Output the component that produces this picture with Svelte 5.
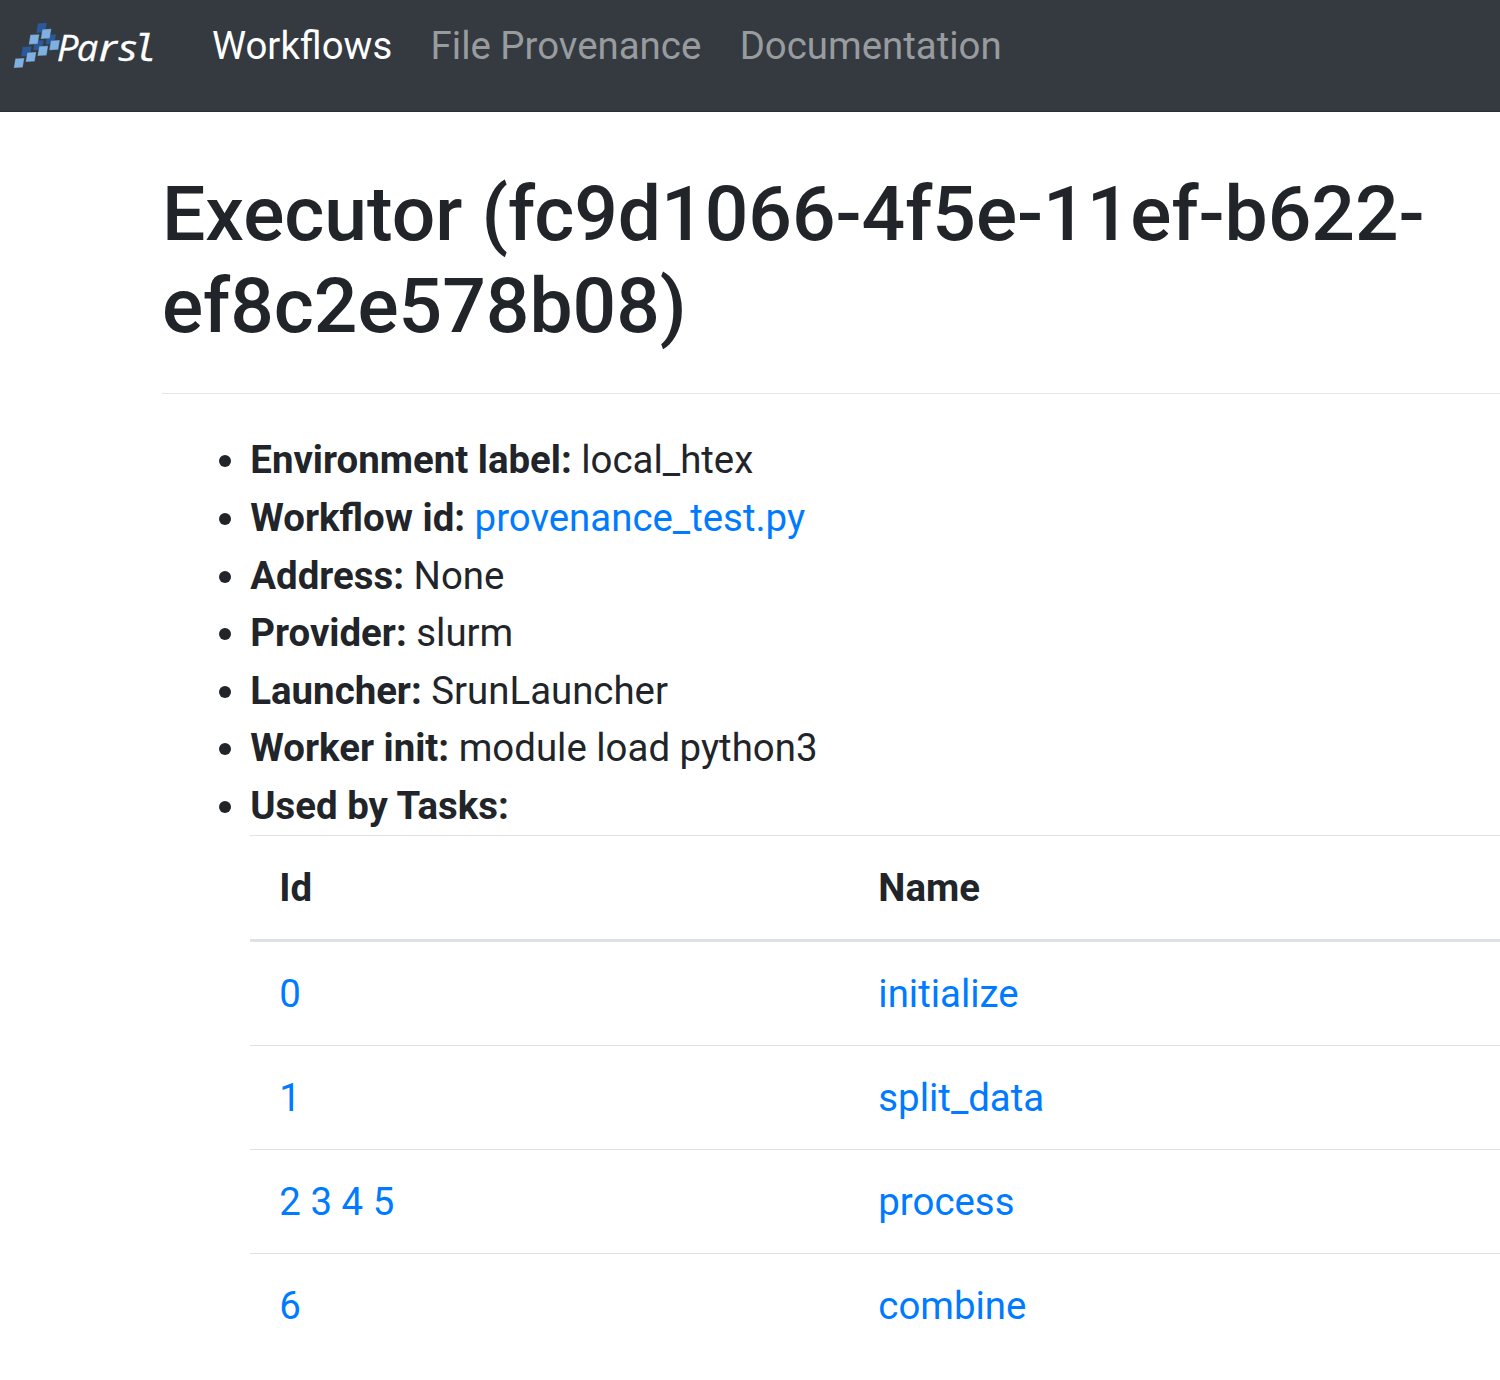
<script>
  const navItems = [
    { label: 'Workflows', active: true },
    { label: 'File Provenance', active: false },
    { label: 'Documentation', active: false }
  ];

  const details = [
    { label: 'Environment label', value: 'local_htex' },
    { label: 'Workflow id', value: 'provenance_test.py', link: true },
    { label: 'Address', value: 'None' },
    { label: 'Provider', value: 'slurm' },
    { label: 'Launcher', value: 'SrunLauncher' },
    { label: 'Worker init', value: 'module load python3' }
  ];

  const tasks = [
    { ids: [0], name: 'initialize' },
    { ids: [1], name: 'split_data' },
    { ids: [2, 3, 4, 5], name: 'process' },
    { ids: [6], name: 'combine' }
  ];

  // Top-left corners of the slanted tiles in the logo.
  const tiles = [
    { x: 36.1, y: 22.8, dark: true },
    { x: 45.3, y: 34.3, dark: true },
    { x: 33.1, y: 40.1, dark: true },
    { x: 20.9, y: 46.3, dark: true },
    { x: 40.6, y: 28.8, dark: false },
    { x: 28.6, y: 34.3, dark: false },
    { x: 49.1, y: 40.1, dark: false },
    { x: 37.4, y: 45.8, dark: false },
    { x: 25.5, y: 51.9, dark: false },
    { x: 13.6, y: 58, dark: false }
  ];

  // Letters of the wordmark, stretched to an even, monospaced-like rhythm.
  const letters = [
    { ch: 'P', x: 56.8, sx: 1.05 },
    { ch: 'a', x: 76.8, sx: 1.04 },
    { ch: 'r', x: 98.8, sx: 1.25 },
    { ch: 's', x: 118.6, sx: 1.18 },
    { ch: 'l', x: 133.9, sx: 1, tail: true }
  ];
</script>

<nav class="navbar">
  <a class="brand" href="#home" aria-label="Parsl">
    <svg width="170" height="80" viewBox="0 0 170 80">
      {#each tiles as t}
        <path
          class:dark={t.dark}
          class="tile"
          d="M{t.x + 1.7} {t.y + 0.5}l9.1 -.5l-1.6 9.6l-9.1 .5z"
        />
      {/each}
      {#each letters as l}
        <text class="wordmark" class:tail={l.tail} transform="translate({l.x} 60.6) scale({l.sx} 1)">{l.ch}</text>
      {/each}
    </svg>
  </a>
  <ul class="links">
    {#each navItems as item}
      <li><a href="#nav" class:active={item.active}>{item.label}</a></li>
    {/each}
  </ul>
</nav>

<main>
  <h2>Executor (fc9d1066-4f5e-11ef-b622-ef8c2e578b08)</h2>
  <hr />
  <ul class="details">
    {#each details as d}
      <li>
        <b>{d.label}:</b>
        {#if d.link}<a href="#workflow">{d.value}</a>{:else}{d.value}{/if}
      </li>
    {/each}
    <li>
      <b>Used by Tasks:</b>
      <table>
        <thead>
          <tr><th class="id">Id</th><th>Name</th></tr>
        </thead>
        <tbody>
          {#each tasks as task}
            <tr>
              <td>{#each task.ids as id}<a href="#task">{id}</a>{' '}{/each}</td>
              <td><a href="#app">{task.name}</a></td>
            </tr>
          {/each}
        </tbody>
      </table>
    </li>
  </ul>
</main>

<style>
  :global(body) {
    margin: 0;
    background: #fff;
    color: #212529;
    font: 400 38.4px/1.5 Roboto, sans-serif;
  }
  a {
    color: #007bff;
    text-decoration: none;
  }
  .navbar {
    box-sizing: border-box;
    height: 112px;
    display: flex;
    align-items: flex-start;
    background: #343a40;
    border-bottom: 1px solid #2a2f35;
  }
  .brand {
    width: 212px;
    height: 80px;
  }
  .brand svg {
    display: block;
  }
  .tile {
    fill: #7fb0e2;
    stroke: #343a40;
    stroke-width: 0.3;
  }
  .tile.dark {
    fill: #2a5a9b;
  }
  .wordmark {
    fill: #fff;
    stroke: #fff;
    stroke-width: 0.3;
    font: italic 36.5px 'Open Sans', 'Noto Sans', sans-serif;
  }
  .tail {
    font: italic 38px 'DejaVu Sans Mono', monospace;
  }
  .links {
    display: flex;
    gap: 38.4px;
    margin: 0;
    padding: 16.5px 0 0;
    list-style: none;
  }
  .links a {
    color: #999c9f;
  }
  .links a.active {
    color: #fff;
  }
  main {
    box-sizing: border-box;
    width: 100%;
    padding: 56px 0 0 162px;
  }
  h2 {
    margin: 0;
    font-size: 76.8px;
    font-weight: 500;
    line-height: 1.2;
    letter-spacing: -0.03px;
  }
  hr {
    height: 1px;
    margin: 40.5px 0 37.6px;
    border: 0;
    background: #e6e6e6;
  }
  .details {
    margin: 0;
    padding-left: 88.3px;
  }
  b,
  th {
    font-weight: 700;
  }
  table {
    width: 100%;
    border-collapse: separate;
    border-spacing: 0;
    table-layout: fixed;
  }
  th,
  td {
    padding: 23.2px 29px 22.2px;
    border-top: 1px solid #dee2e6;
    text-align: left;
  }
  th {
    border-bottom: 3px solid #dee2e6;
  }
  tbody tr:first-child td {
    border-top: 0;
    padding-bottom: 22.5px;
  }
  .id {
    width: 541px;
  }
</style>
